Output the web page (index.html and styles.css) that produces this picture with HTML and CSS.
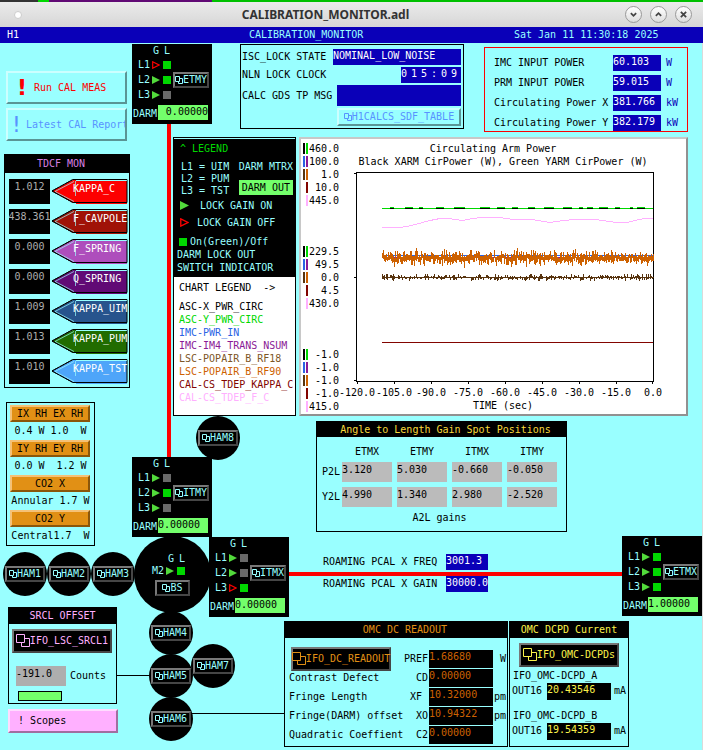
FILE: index.html
```html
<!DOCTYPE html>
<html lang="en">
<head>
    <meta charset="UTF-8">
    <meta name="viewport" content="width=device-width, initial-scale=1.0">
    <title>CALIBRATION_MONITOR.adl</title>
    <link rel="stylesheet" href="styles.css">
</head>
<body>
    <!-- shared icons -->
    <svg class="defs" width="0" height="0" aria-hidden="true">
        <symbol id="related" viewBox="0 0 8 8">
            <path d="M.5 .5h4v5h-4zM4.5 2.5h3v5h-4v-2" fill="none" stroke="currentColor"/>
        </symbol>
        <symbol id="related-big" viewBox="0 0 14 14">
            <path d="M.5 .5h8v8h-8zM8.5 4.5h5v8h-8v-4" fill="none" stroke="currentColor"/>
        </symbol>
        <symbol id="gain-on" viewBox="0 0 8 8"><path d="M0 0l8 4l-8 4z" fill="#52da3b"/></symbol>
        <symbol id="gain-off" viewBox="0 0 8 8"><path d="M.7 .8l6.3 3.2l-6.3 3.2z" fill="none" stroke="#fd0000" stroke-width="1.2"/></symbol>
        <symbol id="tag" viewBox="0 0 78 25">
            <path d="M1 12L22 1h3v23h-3zM25 2h51v23h-51z" fill="currentColor"/>
            <path d="M1 12L22 .5h54v23h-54z" fill="none" stroke="#000"/>
            <path d="M4 12.5L23 2.500M4 12.5L23 22.500M24.500 2v15M25 1.500h51" fill="none" stroke="#9ff" stroke-width=".7"/>
            <path d="M1 12L22 .5M1 12L22 23.500" fill="none" stroke="#000" stroke-dasharray="2 1"/>
        </symbol>
    </svg>

    <div class="desktop-strip"></div>
    <header class="titlebar">
        <span class="dot"></span>
        <h1>CALIBRATION_MONITOR.adl</h1>
        <button class="win-btn" aria-label="Minimize"><svg viewBox="0 0 17 17"><path d="M5.500 7l3 3l3-3"/></svg></button>
        <button class="win-btn" aria-label="Maximize"><svg viewBox="0 0 17 17"><path d="M5.500 10l3-3l3 3"/></svg></button>
        <button class="win-btn" aria-label="Close"><svg viewBox="0 0 17 17"><path d="M5.500 5.500l6 6M11.500 5.500l-6 6"/></svg></button>
    </header>
    <div class="infobar">
        <span class="site">H1</span>
        <span>CALIBRATION_MONITOR</span>
        <span>Sat Jan 11 11:30:18 2025</span>
    </div>

    <main class="screen">
        <div class="side">
            <button class="shell red"><b>!</b>Run CAL MEAS</button>
            <button class="shell blue"><b>!</b>Latest CAL Report</button>

            <section class="panel tdcf">
                <h2>TDCF MON</h2>
                <div class="kappa"><span>1.012</span><button style="color:#fd0000"><svg><use href="#tag"/></svg><i>KAPPA_C</i></button></div>
                <div class="kappa"><span>438.361</span><button style="color:#a01207"><svg><use href="#tag"/></svg><i>F_CAVPOLE</i></button></div>
                <div class="kappa"><span>0.000</span><button style="color:#ae4ebc"><svg><use href="#tag"/></svg><i>F_SPRING</i></button></div>
                <div class="kappa"><span>0.000</span><button style="color:#610a75"><svg><use href="#tag"/></svg><i>Q_SPRING</i></button></div>
                <div class="kappa"><span>1.009</span><button style="color:#27548d"><svg><use href="#tag"/></svg><i>KAPPA_UIM</i></button></div>
                <div class="kappa"><span>1.013</span><button style="color:#216c00"><svg><use href="#tag"/></svg><i>KAPPA_PUM</i></button></div>
                <div class="kappa"><span>1.010</span><button style="color:#4ea5f9"><svg><use href="#tag"/></svg><i>KAPPA_TST</i></button></div>
            </section>

            <section class="panel heaters">
                <button>IX RH EX RH</button>
                <p>0.4 W 1.0  W</p>
                <button>IY RH EY RH</button>
                <p>0.0 W  1.2 W</p>
                <button>CO2 X</button>
                <p>Annular 1.7 W</p>
                <button>CO2 Y</button>
                <p>Central1.7  W</p>
            </section>

            <section class="panel srcl">
                <h2>SRCL OFFSET</h2>
                <button class="related big"><svg><use href="#related-big"/></svg>IFO_LSC_SRCL1</button>
                <div class="offset">
                    <input id="srcl" type="text" value="-191.0">
                    <label for="srcl">Counts</label>
                </div>
                <div class="bar"></div>
            </section>
            <button class="scopes">! Scopes</button>
        </div>

        <div class="content">
            <div class="status">
                <section class="panel lock">
                    <div><span>ISC_LOCK STATE</span><output class="state">NOMINAL_LOW_NOISE</output></div>
                    <div><span>NLN LOCK CLOCK</span><output class="clock"><i>0</i><i>1</i><i>5</i><i>:</i><i>0</i><i>9</i></output></div>
                    <div class="msg"><span>CALC GDS TP MSG</span><output></output></div>
                    <button><svg><use href="#related"/></svg>H1CALCS_SDF_TABLE</button>
                </section>
                <section class="panel power">
                    <span>IMC INPUT POWER</span><output>60.103</output><em>W</em>
                    <span>PRM INPUT POWER</span><output>59.015</output><em>W</em>
                    <span>Circulating Power X</span><output>381.766</output><em>kW</em>
                    <span>Circulating Power Y</span><output>382.179</output><em>kW</em>
                </section>
            </div>

            <div class="charts">
                <section class="panel legend">
                    <div class="keys">
                        <h3>^ LEGEND</h3>
                        <div class="levels">
                            <p>L1 = UIM<br>L2 = PUM<br>L3 = TST</p>
                            <p>DARM MTRX<span>DARM OUT</span></p>
                        </div>
                        <p class="key on"><svg><use href="#gain-on"/></svg>LOCK GAIN ON</p>
                        <p class="key off"><svg><use href="#gain-off"/></svg>LOCK GAIN OFF</p>
                        <p class="key led-key"><i class="led on"></i>On(Green)/Off</p>
                        <p>DARM LOCK OUT</p>
                        <p>SWITCH INDICATOR</p>
                    </div>
                    <h3 class="chart-legend">CHART LEGEND  -&gt;</h3>
                    <ul>
                        <li class="black">ASC-X_PWR_CIRC</li>
                        <li class="green">ASC-Y_PWR_CIRC</li>
                        <li class="azure">IMC-PWR_IN</li>
                        <li class="purple">IMC-IM4_TRANS_NSUM</li>
                        <li class="brown">LSC-POPAIR_B_RF18</li>
                        <li class="orange">LSC-POPAIR_B_RF90</li>
                        <li class="maroon">CAL-CS_TDEP_KAPPA_C</li>
                        <li class="pink">CAL-CS_TDEP_F_C</li>
                    </ul>
                </section>

                <section class="strip">
                    <div class="y-axis">
                        <ol><li>460.0</li><li>100.0</li><li>1.0</li><li>10.0</li><li>445.0</li></ol>
                        <ol><li>229.5</li><li>49.5</li><li>0.0</li><li>4.5</li><li>430.0</li></ol>
                        <ol><li>-1.0</li><li>-1.0</li><li>-1.0</li><li>-1.0</li><li>415.0</li></ol>
                    </div>
                    <div class="figure">
                        <h3>Circulating Arm Power</h3>
                        <p>Black XARM CirPower (W), Green YARM CirPower (W)</p>
                        <svg id="plot" viewBox="0 0 298 213" preserveAspectRatio="none">
                            <path d="M.5 .5h297v209h-297zM-2 1.500h2M-2 105.500h2M-2 208.500h2M1.500 210v2M38.500 210v2M75.500 210v2M112.500 210v2M149.500 210v2M186.500 210v2M223.500 210v2M260.500 210v2M296.500 210v2" stroke="#000"/>
                            <path id="xarm" stroke="#000"/>
                            <path id="yarm" stroke="#00d800"/>
                            <path stroke="#ffb0ff" d="M26 55.500H43L51 54.500L61 52L74 48.500L84 46.500H92L106 48.500L114 47L124 45.500H144L157 47.500H176L194 50.500L204 49L217 47.500H239L261 50.500H271L281 48L289 46.500H297"/>
                            <path stroke="#2a63e4" d="M26 83.500H297"/>
                            <path stroke="#8b1a96" d="M26 85.500H297"/>
                            <path id="rf90" stroke="#cd6100"/>
                            <path id="rf18" stroke="#58340f"/>
                            <path stroke="#820400" d="M26 170.500H297"/>
                        </svg>
                        <div class="x-axis">
                            <span>-120.0</span><span>-105.0</span><span>-90.0</span><span>-75.0</span><span>-60.0</span><span>-45.0</span><span>-30.0</span><span>-15.0</span><span>0.0</span>
                        </div>
                        <p class="x-title">TIME (sec)</p>
                    </div>
                </section>
            </div>

            <section class="panel a2l">
                <h2>Angle to Length Gain Spot Positions</h2>
                <table>
                    <caption>A2L gains</caption>
                    <thead>
                        <tr><th class="axis"></th><th>ETMX</th><th>ETMY</th><th>ITMX</th><th>ITMY</th></tr>
                    </thead>
                    <tbody>
                        <tr>
                            <th>P2L</th>
                            <td><input aria-label="P2L ETMX" value="3.120"></td>
                            <td><input aria-label="P2L ETMY" value="5.030"></td>
                            <td><input aria-label="P2L ITMX" value="-0.660"></td>
                            <td><input aria-label="P2L ITMY" value="-0.050"></td>
                        </tr>
                        <tr>
                            <th>Y2L</th>
                            <td><input aria-label="Y2L ETMX" value="4.990"></td>
                            <td><input aria-label="Y2L ETMY" value="1.340"></td>
                            <td><input aria-label="Y2L ITMX" value="2.980"></td>
                            <td><input aria-label="Y2L ITMY" value="-2.520"></td>
                        </tr>
                    </tbody>
                </table>
            </section>

            <div class="pcal">
                <span>ROAMING PCAL X FREQ</span><output>3001.3</output>
                <span>ROAMING PCAL X GAIN</span><output>30000.0</output>
            </div>

            <div class="omc">
                <section class="panel readout">
                    <h2>OMC DC READOUT</h2>
                    <div class="rows">
                        <button class="related big"><svg><use href="#related-big"/></svg>IFO_DC_READOUT</button><b>PREF</b><output>1.68680</output><span>&nbsp;W</span>
                        <span>Contrast Defect</span><b>CD</b><output>0.00000</output><span></span>
                        <span>Fringe Length</span><b>XF&nbsp;</b><output>10.32000</output><span>pm</span>
                        <span>Fringe(DARM) offset</span><b>XO</b><output>10.94322</output><span>pm</span>
                        <span>Quadratic Coeffient</span><b>C2</b><output>0.00000</output><span></span>
                    </div>
                </section>
                <section class="panel dcpd">
                    <h2>OMC DCPD Current</h2>
                    <button class="related big"><svg><use href="#related-big"/></svg>IFO_OMC-DCPDs</button>
                    <p>IFO_OMC-DCPD_A</p>
                    <div><span>OUT16</span><output>20.43546</output><span>mA</span></div>
                    <p>IFO_OMC-DCPD_B</p>
                    <div><span>OUT16</span><output>19.54359</output><span>mA</span></div>
                </section>
            </div>
        </div>

        <!-- interferometer drawing, laid over the free space between panels -->
        <div class="beam y-arm"></div>
        <div class="beam x-arm"></div>
        <div class="wire wire-srcl"></div>
        <div class="wire wire-omc"></div>

        <div class="ham" style="left:3px; top:509px"><button class="related"><svg><use href="#related"/></svg>HAM1</button></div>
        <div class="ham" style="left:47px; top:509px"><button class="related"><svg><use href="#related"/></svg>HAM2</button></div>
        <div class="ham" style="left:91px; top:509px"><button class="related"><svg><use href="#related"/></svg>HAM3</button></div>
        <div class="ham" style="left:149px; top:568px"><button class="related"><svg><use href="#related"/></svg>HAM4</button></div>
        <div class="ham" style="left:149px; top:611px"><button class="related"><svg><use href="#related"/></svg>HAM5</button></div>
        <div class="ham" style="left:149px; top:654px"><button class="related"><svg><use href="#related"/></svg>HAM6</button></div>
        <div class="ham" style="left:191px; top:601px"><button class="related"><svg><use href="#related"/></svg>HAM7</button></div>
        <div class="ham" style="left:196px; top:373px"><button class="related"><svg><use href="#related"/></svg>HAM8</button></div>

        <div class="splitter">
            <p class="gl"><span>G</span><span>L</span></p>
            <p class="level">M2<svg><use href="#gain-on"/></svg><i class="led on"></i></p>
            <button class="related"><svg><use href="#related"/></svg>BS</button>
        </div>

        <div class="optic etmy">
            <p class="gl"><span>G</span><span>L</span></p>
            <div class="mid">
                <div>
                    <p class="level">L1<svg><use href="#gain-off"/></svg><i class="led on"></i></p>
                    <p class="level">L2<svg><use href="#gain-on"/></svg><i class="led on"></i></p>
                    <p class="level">L3<svg><use href="#gain-on"/></svg><i class="led"></i></p>
                </div>
                <button class="related"><svg><use href="#related"/></svg>ETMY</button>
            </div>
            <p class="darm">DARM<output>0.00000</output></p>
        </div>
        <div class="optic itmy">
            <p class="gl"><span>G</span><span>L</span></p>
            <div class="mid">
                <div>
                    <p class="level">L1<svg><use href="#gain-on"/></svg><i class="led"></i></p>
                    <p class="level">L2<svg><use href="#gain-on"/></svg><i class="led on"></i></p>
                    <p class="level">L3<svg><use href="#gain-on"/></svg><i class="led"></i></p>
                </div>
                <button class="related"><svg><use href="#related"/></svg>ITMY</button>
            </div>
            <p class="darm">DARM<output>0.00000</output></p>
        </div>
        <div class="optic itmx">
            <p class="gl"><span>G</span><span>L</span></p>
            <div class="mid">
                <div>
                    <p class="level">L1<svg><use href="#gain-on"/></svg><i class="led"></i></p>
                    <p class="level">L2<svg><use href="#gain-on"/></svg><i class="led"></i></p>
                    <p class="level">L3<svg><use href="#gain-off"/></svg><i class="led on"></i></p>
                </div>
                <button class="related"><svg><use href="#related"/></svg>ITMX</button>
            </div>
            <p class="darm">DARM<output>0.00000</output></p>
        </div>
        <div class="optic etmx">
            <p class="gl"><span>G</span><span>L</span></p>
            <div class="mid">
                <div>
                    <p class="level">L1<svg><use href="#gain-on"/></svg><i class="led on"></i></p>
                    <p class="level">L2<svg><use href="#gain-on"/></svg><i class="led on"></i></p>
                    <p class="level">L3<svg><use href="#gain-on"/></svg><i class="led on"></i></p>
                </div>
                <button class="related"><svg><use href="#related"/></svg>ETMX</button>
            </div>
            <p class="darm">DARM<output>1.00000</output></p>
        </div>
    </main>
    <script src="chart.js"></script>
</body>
</html>
```

FILE: styles.css
```css
* {
    box-sizing: border-box;
}

body {
    margin: 0;
    min-height: 100vh;
    display: flex;
    flex-direction: column;
    background-color: #99ffff;
    color: #000;
    font: 10px/12px "DejaVu Sans Mono", monospace;
    white-space: nowrap;
}

h1, h2, h3, p, ul, ol {
    margin: 0;
    padding: 0;
    font-size: 10px;
    font-weight: normal;
    list-style: none;
}

button, input {
    font: inherit;
    color: inherit;
    margin: 0;
    padding: 0;
    border: 0;
    border-radius: 0;
    background: none;
}

button {
    cursor: pointer;
}

i, em {
    font-style: normal;
}

b {
    font-weight: normal;
}

.defs {
    position: absolute;
}

/* window frame */
.desktop-strip {
    height: 2px;
    background: linear-gradient(90deg, #333 38px, #00d800 38px, #00d800 49px, #610a75 49px, #610a75 212px, #00c000 212px);
}

.titlebar {
    display: flex;
    align-items: center;
    gap: 8px;
    height: 25px;
    padding: 0 11px 0 14px;
    background: linear-gradient(#ebebeb, #d6d6d6);
}

.titlebar h1 {
    flex: 1;
    padding-left: 4px;
    text-align: center;
    font: bold 12px/20px "Noto Sans", sans-serif;
    color: #333;
}

.dot {
    width: 8px;
    height: 8px;
    border: 1px solid #ccc;
    border-radius: 50%;
    background-color: #fff;
}

.win-btn {
    width: 17px;
    height: 17px;
    border: 1px solid #999;
    border-radius: 50%;
    background: linear-gradient(#fff, #ddd);
}

.win-btn svg {
    display: block;
    width: 15px;
    height: 15px;
    fill: none;
    stroke: #444;
    stroke-width: 2;
}

.infobar {
    display: grid;
    grid-template-columns: 242px 1fr 189px;
    padding-left: 7px;
    background-color: #0a00b8;
    color: #99ffff;
    line-height: 16px;
}

.site {
    color: #fff;
}

.screen {
    position: relative;
    flex: 1;
    display: flex;
    border-right: 1px solid #dadada;
}

/* shared pieces */
.panel {
    border: 1px solid #000;
}

.panel h2 {
    background-color: #000;
    line-height: 16px;
    text-align: center;
}

output {
    background-color: #0a00b8;
    color: #fff;
    overflow: hidden;
}

.related {
    display: flex;
    align-items: center;
    justify-content: center;
    height: 16px;
    border: 2px solid;
    border-color: #787878 #464646 #464646 #787878;
    background-color: #000;
    color: #99ffff;
}

.related svg, .lock button svg {
    flex: none;
    width: 8px;
    height: 8px;
}

.related.big {
    width: 100px;
    height: 24px;
}

.related.big svg {
    width: 14px;
    height: 14px;
}

.led {
    width: 8px;
    height: 8px;
    background-color: #696969;
}

.led.on {
    background-color: #00d800;
}

/* left column */
.side {
    width: 173px;
    padding: 28px 0 0 4px;
}

.shell {
    display: flex;
    align-items: center;
    width: 121px;
    height: 33px;
    margin: 0 0 4px 2px;
    border: 2px solid;
    border-color: #ccffff #5a9595 #5a9595 #ccffff;
    overflow: hidden;
}

.shell b {
    flex: none;
    width: 18px;
    font: 22px/24px "DejaVu Sans", sans-serif;
    text-align: left;
    padding-left: 4px;
}

.shell.red {
    color: #fd0000;
}

.shell.red b {
    width: 26px;
    padding-left: 9px;
    font-weight: bold;
}

.shell.blue {
    color: #5893ff;
}

.tdcf {
    width: 126px;
    margin-top: 13px;
    padding-bottom: 3px;
}

.tdcf h2 {
    padding-right: 12px;
    margin-bottom: 6px;
    line-height: 18px;
    color: #d67fe2;
}

.kappa {
    display: flex;
    gap: 1px;
    height: 25px;
    margin: 0 0 5px 4px;
}

.kappa:last-child {
    margin-bottom: 0;
}

.kappa span {
    display: flex;
    justify-content: center;
    width: 41px;
    line-height: 15px;
    background-color: #000;
    color: #aeaeae;
    overflow: hidden;
}

.kappa button {
    display: grid;
    width: 78px;
    text-align: left;
    overflow: hidden;
}

.kappa svg, .kappa i {
    grid-area: 1 / 1;
}

.kappa svg {
    width: 78px;
    height: 25px;
}

.kappa i {
    padding-left: 22px;
    line-height: 19px;
    color: #fff;
    z-index: 1;
}

.heaters {
    width: 89px;
    margin: 14px 0 0 2px;
    padding: 2px 3px 0;
}

.heaters button {
    display: block;
    width: 80px;
    height: 17px;
    border: 2px solid;
    border-color: #f5c176 #8a560a #8a560a #f5c176;
    background-color: #e19015;
    line-height: 12px;
}

.heaters p {
    white-space: pre;
    text-align: center;
    line-height: 18px;
}

.srcl {
    width: 109px;
    margin: 61px 0 0 4px;
    padding-bottom: 2px;
}

.srcl h2, .srcl .related {
    color: #ffb0ff;
}

.srcl .related {
    margin: 5px 3px 13px;
}

.offset {
    display: flex;
    align-items: center;
    gap: 4px;
    margin: 0 7px 5px;
}

.offset input {
    width: 50px;
    height: 20px;
    padding-bottom: 6px;
    background-color: #aeaeae;
}

.bar {
    width: 44px;
    height: 10px;
    margin-left: 9px;
    border: 1px solid #000;
    background-color: #73ff6b;
}

.scopes {
    width: 110px;
    height: 24px;
    margin: 5px 0 0 4px;
    padding-left: 8px;
    border: 2px solid;
    border-color: #ffdcff #a06ea0 #a06ea0 #ffdcff;
    background-color: #ffb0ff;
    text-align: left;
}

/* right part */
.content {
    flex: 1;
    min-width: 0;
    padding: 1px 14px 0 0;
}

.status {
    display: flex;
    justify-content: space-between;
    align-items: flex-start;
    height: 93px;
}

.lock {
    display: flex;
    flex-direction: column;
    gap: 2px;
    width: 224px;
    height: 85px;
    margin-left: 67px;
    padding: 4px 2px 0 1px;
}

.lock div {
    display: flex;
    align-items: center;
    justify-content: space-between;
}

.lock output {
    height: 16px;
    line-height: 14px;
}

.lock .state {
    width: 128px;
}

.lock .clock {
    display: grid;
    grid-template-columns: repeat(6, 10px);
}

.lock .msg output {
    width: 124px;
    height: 21px;
}

.lock button {
    display: flex;
    align-items: center;
    justify-content: center;
    align-self: flex-end;
    width: 124px;
    height: 18px;
    border: 2px solid;
    border-color: #ccffff #5a9595 #5a9595 #ccffff;
    color: #5893ff;
}

.power {
    display: grid;
    grid-template-columns: 114px 48px auto;
    grid-auto-rows: 16px;
    gap: 4px 5px;
    width: 204px;
    height: 85px;
    margin-top: 3px;
    padding: 7px 0 0 9px;
    border-color: #fd0000;
    line-height: 15px;
}

.power output {
    line-height: 14px;
}

.power em {
    color: #0a00b8;
}

.charts {
    display: flex;
    gap: 3px;
    height: 279px;
}

.legend {
    width: 123px;
    background-color: #fff;
}

.keys {
    padding: 4px 2px 3px 3px;
    background-color: #000;
    color: #99ffff;
    box-shadow: inset 0 1px #99ffff;
    line-height: 13px;
}

.keys h3 {
    padding-left: 3px;
    margin-bottom: 6px;
    color: #00d800;
}

.levels {
    display: flex;
    justify-content: space-between;
    padding-left: 4px;
    margin-bottom: 2px;
    line-height: 12px;
}

.levels span {
    display: block;
    margin-top: 7px;
    padding-left: 3px;
    line-height: 15px;
    background-color: #73ff6b;
    color: #000;
}

.key {
    display: flex;
    align-items: center;
    gap: 11px;
    padding-left: 3px;
    margin-bottom: 4px;
}

.key svg {
    width: 9px;
    height: 9px;
}

.key.off {
    gap: 8px;
    margin-bottom: 6px;
}

.led-key {
    gap: 3px;
    padding-left: 2px;
    margin-bottom: 0;
}

.chart-legend {
    padding: 5px 0 6px 5px;
    white-space: pre;
}

.legend ul {
    padding-left: 5px;
    line-height: 13px;
}

.black { color: #000; }
.green { color: #00d800; }
.azure { color: #2a63e4; }
.purple { color: #8b1a96; }
.brown { color: #7d5627; }
.orange { color: #cd6100; }
.maroon { color: #820400; }
.pink { color: #ffb0ff; }

.strip {
    flex: 1;
    display: flex;
    min-width: 0;
    border: 2px solid;
    border-color: #c8c8c8 #919191 #919191 #c8c8c8;
    background-color: #fff;
}

.y-axis {
    display: flex;
    flex-direction: column;
    justify-content: space-between;
    width: 38px;
    padding: 3px 0 1px 2px;
    line-height: 13px;
}

/* pen colours stand before each scale value */
.y-axis li {
    text-align: right;
    background: linear-gradient(90deg, var(--a) 2px, #fff 2px, #fff 3px, var(--b) 3px, var(--b) 5px, #fff 5px) 0 1px / 6px 11px no-repeat;
}

.y-axis li:nth-child(1) { --a: #000; --b: #00d800; }
.y-axis li:nth-child(2) { --a: #2a63e4; --b: #8b1a96; }
.y-axis li:nth-child(3) { --a: #58340f; --b: #cd6100; }
.y-axis li:nth-child(4) { --a: #fff; --b: #820400; }
.y-axis li:nth-child(5) { --a: #fff; --b: #ffb0ff; }

.figure {
    flex: 1;
    min-width: 0;
    padding: 3px 32px 0 17px;
    text-align: center;
}

.figure h3 {
    padding-right: 24px;
    line-height: 13px;
}

.figure p {
    margin: 0 4px 3px 0;
    line-height: 14px;
}

#plot {
    display: block;
    width: 100%;
    height: 213px;
    overflow: visible;
    fill: none;
    shape-rendering: crispEdges;
}

.x-axis {
    display: flex;
    justify-content: space-between;
    padding: 0 1px;
    line-height: 16px;
}

.x-axis span {
    display: flex;
    justify-content: center;
    width: 0;
}

.figure .x-title {
    line-height: 10px;
}

.a2l {
    width: 251px;
    margin: 5px 0 0 143px;
}

.a2l h2 {
    padding-left: 8px;
    line-height: 15px;
    color: #f9da3c;
}

.a2l table {
    border-spacing: 5px;
    table-layout: fixed;
    width: 245px;
}

.a2l caption {
    caption-side: bottom;
    line-height: 12px;
    padding-bottom: 7px;
}

.a2l th {
    height: 15px;
    padding: 5px 0 0;
    font-weight: normal;
    line-height: 10px;
}

.a2l tbody th {
    height: 20px;
    padding: 0;
}

.a2l .axis {
    width: 15px;
}

.a2l td {
    padding: 0;
}

.a2l input {
    display: block;
    width: 50px;
    height: 20px;
    padding-bottom: 6px;
    background-color: #bbbbbb;
}

.pcal {
    display: grid;
    grid-template-columns: 120px 42px;
    gap: 6px 3px;
    margin: 22px 0 0 150px;
    line-height: 15px;
}

.pcal output {
    height: 16px;
    line-height: 14px;
}

.omc {
    display: flex;
    gap: 1px;
    margin: 29px 0 0 111px;
}

.omc output {
    width: 64px;
    line-height: 13px;
    background-color: #000;
}

.readout {
    width: 224px;
}

.readout h2 {
    padding-left: 18px;
}

.readout h2, .readout .related {
    color: #e19015;
}

.rows {
    display: grid;
    grid-template-columns: 114px 24px 64px 12px;
    grid-auto-rows: 18px;
    gap: 1px;
    padding: 12px 0 2px 4px;
    line-height: 18px;
}

.rows .related {
    align-self: center;
    margin-left: 2px;
    line-height: 12px;
}

.rows b {
    text-align: right;
}

.rows output {
    color: #cd6100;
}

.dcpd {
    width: 120px;
}

.dcpd h2, .dcpd output {
    color: #fbf34a;
}

.dcpd .related {
    margin: 5px 9px 1px;
    color: #fbf34a;
}

.dcpd p {
    padding-left: 3px;
    line-height: 15px;
}

.dcpd div {
    display: flex;
    gap: 3px;
    height: 17px;
    margin-bottom: 8px;
    padding-left: 2px;
    line-height: 16px;
}

.dcpd div:last-child {
    margin-bottom: 0;
}

.dcpd div span:first-child {
    width: 32px;
}

/* interferometer drawing */
.beam {
    position: absolute;
    background-color: #fd0000;
}

.y-arm {
    left: 167px;
    top: 81px;
    width: 4px;
    height: 333px;
}

.x-arm {
    left: 289px;
    right: 80px;
    top: 529px;
    height: 4px;
}

.wire {
    position: absolute;
    height: 1px;
    background-color: #000;
}

.wire-srcl {
    left: 117px;
    top: 632px;
    width: 34px;
}

.wire-omc {
    left: 190px;
    top: 670px;
    width: 94px;
}

.ham, .splitter {
    position: absolute;
    display: flex;
    align-items: center;
    justify-content: center;
    width: 44px;
    height: 44px;
    border-radius: 50%;
    background-color: #000;
    color: #99ffff;
}

.ham .related {
    flex: none;
    width: 40px;
}

.splitter {
    flex-direction: column;
    left: 134px;
    top: 493px;
    width: 77px;
    height: 77px;
}

.splitter .related {
    width: 35px;
    margin-top: 3px;
}

.splitter .gl {
    padding-left: 8px;
}

.splitter .level {
    padding-right: 8px;
    line-height: 12px;
}

.optic {
    position: absolute;
    width: 80px;
    height: 80px;
    background-color: #000;
    color: #99ffff;
}

.etmy { left: 132px; top: 1px; }
.itmy { left: 132px; top: 414px; }
.itmx { left: 209px; top: 494px; }
.etmx { right: 0; top: 493px; }

.gl {
    display: flex;
    gap: 5px;
    line-height: 12px;
}

.optic .gl {
    padding: 1px 0 0 21px;
}

.mid {
    display: flex;
    align-items: center;
    gap: 2px;
    height: 45px;
    margin-bottom: 3px;
    padding-left: 6px;
}

.mid .related {
    width: 36px;
}

.level {
    display: flex;
    align-items: center;
    line-height: 15px;
}

.level svg {
    width: 8px;
    height: 8px;
    margin: 0 3px 0 2px;
}

.darm {
    display: flex;
    justify-content: space-between;
    padding: 0 4px 0 1px;
    line-height: 18px;
}

.darm output {
    width: 50px;
    height: 15px;
    line-height: 13px;
    background-color: #73ff6b;
    color: #000;
}

.etmy output {
    text-align: right;
}
```

FILE: chart.js
```js
// intervals where the Y arm sits one step above the X arm
const steps = [[34, 38], [49, 57], [63, 67], [80, 88], [98, 109], [124, 134], [141, 149],
    [156, 162], [172, 179], [188, 198], [207, 216], [223, 227], [231, 237], [243, 252],
    [259, 264], [274, 277], [281, 289]];

let xarm = '';
let yarm = 'M26 36.5';
for (const [from, to] of steps) {
    xarm += `M${from} 36.5H${to}`;
    yarm += `H${from}M${from} 35.5H${to}M${to} 36.5`;
}
document.getElementById('xarm').setAttribute('d', xarm);
document.getElementById('yarm').setAttribute('d', yarm + 'H297');

let seed = 11;
function rand() {
    seed = (seed * 16807) % 2147483647;
    return seed / 2147483647;
}

// one vertical min/max stroke per pixel column
function noise(id, mid, spread, base) {
    let d = '';
    for (let x = 26; x < 298; x++) {
        const shift = (rand() - 0.5) * base * 2;
        const up = base + Math.pow(rand(), 3) * spread;
        const down = base + Math.pow(rand(), 3) * spread;
        d += `M${x + 0.5} ${Math.round(mid + shift - up)}V${Math.round(mid + shift + down)}`;
    }
    document.getElementById(id).setAttribute('d', d);
}

noise('rf90', 86, 7, 2);
noise('rf18', 105.5, 3, 0.5);
```
